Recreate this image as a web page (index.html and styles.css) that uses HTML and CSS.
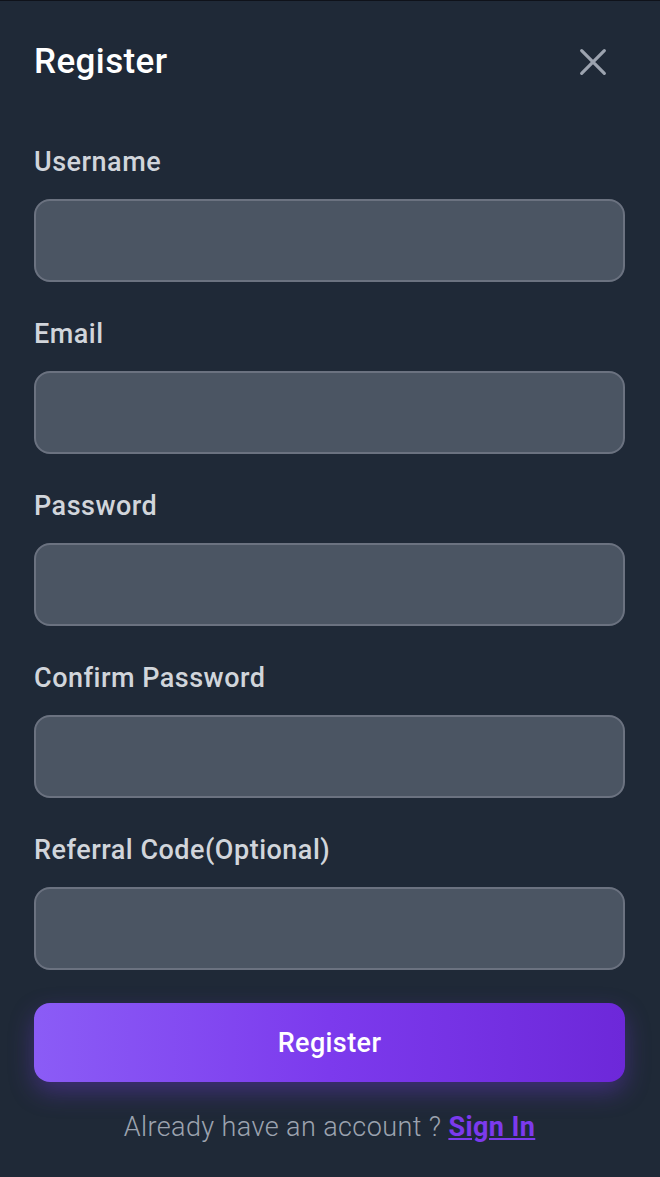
FILE: index.html
```html
<!DOCTYPE html>
<html lang="en">
<head>
  <meta charset="UTF-8" />
  <meta name="viewport" content="width=device-width, initial-scale=1.0" />
  <title>Register</title>
  <link rel="stylesheet" href="styles.css">
</head>
<body>

<!-- Register Modal -->
<div class="modal">
  <div class="modal-header">
    <h2>Register</h2>
    <button class="close-btn" aria-label="Close">
      <svg width="32" height="32" viewBox="0 0 24 24" fill="none" stroke="currentColor" stroke-width="2.4" stroke-linecap="round">
        <path d="M3.5 3.5L20.5 20.5M20.5 3.5L3.5 20.5" />
      </svg>
    </button>
  </div>

  <form class="register-form">
    <div class="field">
      <label for="username">Username</label>
      <input type="text" id="username" />
    </div>
    <div class="field">
      <label for="email">Email</label>
      <input type="email" id="email" />
    </div>
    <div class="field">
      <label for="password">Password</label>
      <input type="password" id="password" />
    </div>
    <div class="field">
      <label for="confirm">Confirm Password</label>
      <input type="password" id="confirm" />
    </div>
    <div class="field">
      <label for="referral">Referral Code(Optional)</label>
      <input type="text" id="referral" />
    </div>

    <button type="button" class="primary-btn">Register</button>
  </form>

  <p class="switch">Already have an account ? <a href="#">Sign In</a></p>
</div>

</body>
</html>
```

FILE: styles.css
```css
* { margin: 0; padding: 0; box-sizing: border-box; }

html, body {
  height: 100%;
}

body {
  font-family: 'Roboto', 'Liberation Sans', sans-serif;
  background: #1f2937;
}

.modal {
  min-height: 100%;
  background: #1f2937;
  border-top: 1px solid #0f121a;
  padding: 39px 35px 30px 34px;
}

.modal-header {
  display: flex;
  justify-content: space-between;
  align-items: center;
  height: 44px;
}

.modal-header h2 {
  color: #ffffff;
  font-size: 35px;
  font-weight: 500;
  letter-spacing: 0.4px;
  line-height: 44px;
}

.close-btn {
  background: none;
  border: none;
  color: #9ca3af;
  cursor: pointer;
  display: flex;
  margin-right: 16px;
}

.register-form {
  display: flex;
  flex-direction: column;
  margin-top: 60px;
}

.field {
  display: flex;
  flex-direction: column;
  gap: 19px;
  margin-bottom: 34px;
}

.field label {
  color: #d1d5db;
  font-size: 27px;
  font-weight: 500;
  letter-spacing: 0.5px;
  line-height: 36px;
}

.field input {
  height: 83px;
  background: #4b5563;
  border: 2px solid #6b7280;
  border-radius: 16px;
  color: #fff;
  font-size: 24px;
  padding: 0 20px;
}

.primary-btn {
  margin-top: -1px;
  height: 79px;
  border: none;
  border-radius: 16px;
  background: linear-gradient(90deg, #8b5cf6 0%, #7c3aed 50%, #6d28d9 100%);
  color: white;
  font-family: inherit;
  font-size: 27px;
  font-weight: 500;
  letter-spacing: 0.4px;
  cursor: pointer;
  box-shadow: 0 10px 25px rgba(124, 58, 237, 0.35);
}

.primary-btn:hover {
  opacity: 0.9;
}

.switch {
  margin-top: 27px;
  text-align: center;
  color: #9ca3af;
  font-size: 27px;
  font-weight: 300;
  letter-spacing: 0.4px;
  line-height: 36px;
}

.switch a {
  color: #7c3aed;
  font-weight: 700;
  text-decoration: underline;
}
```
